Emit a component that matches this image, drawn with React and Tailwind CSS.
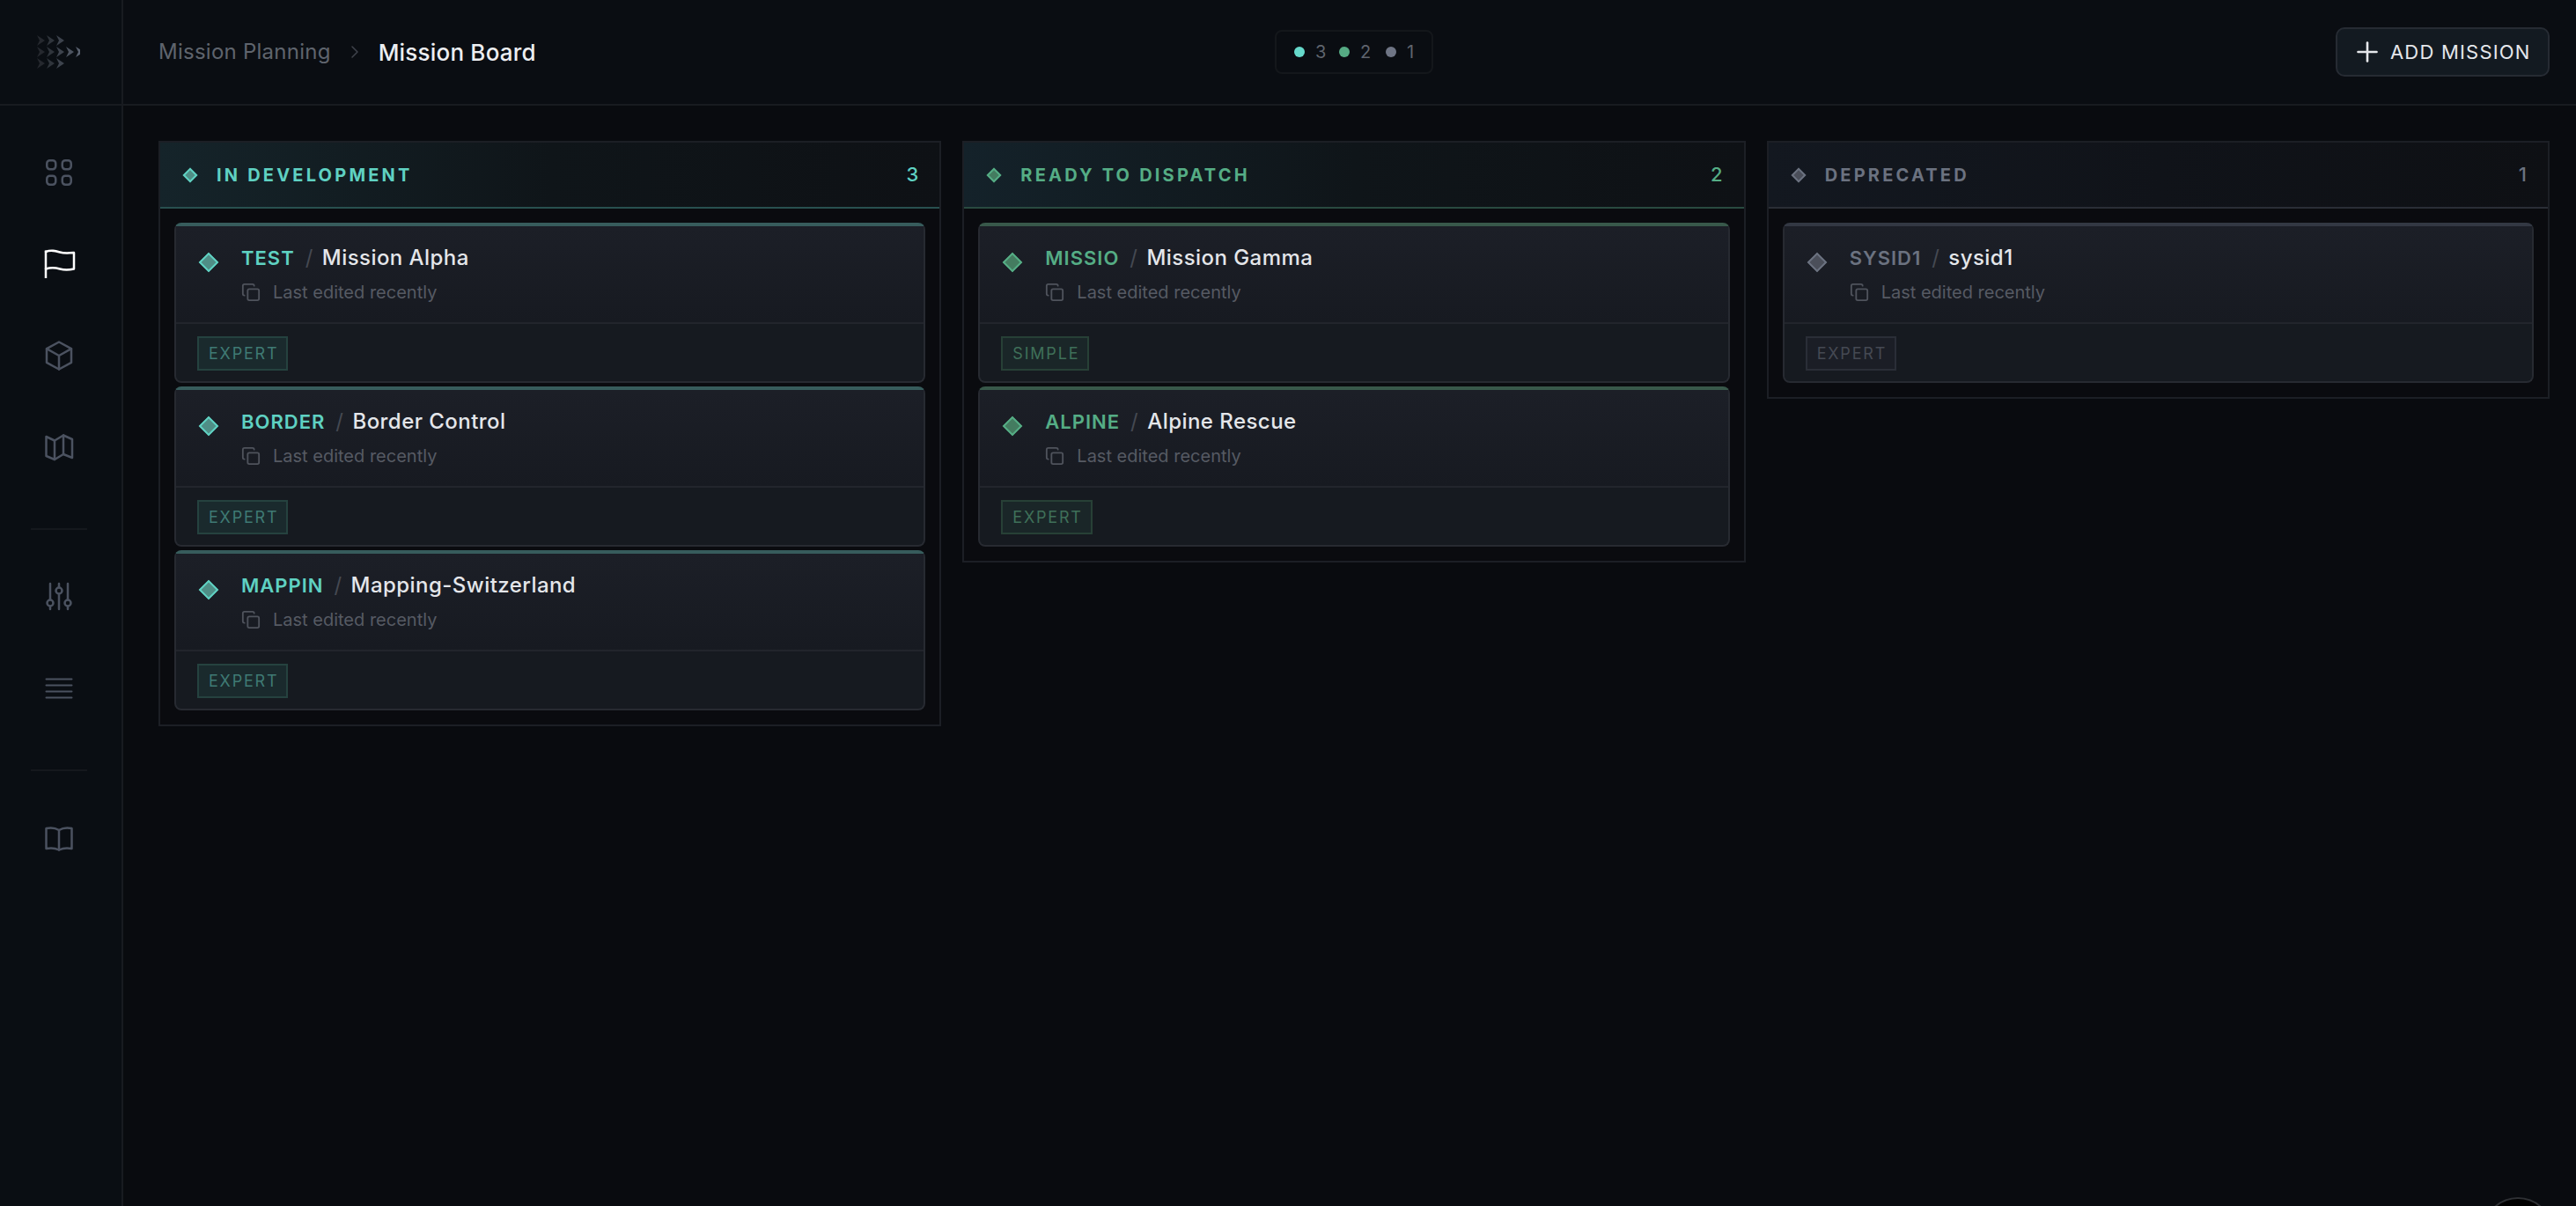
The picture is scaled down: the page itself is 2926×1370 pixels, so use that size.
import { ChevronRight, Copy, Plus } from 'lucide-react'

const themes = {
  teal: {
    text: 'text-[#5fd1c2]',
    diamond: 'border-[#5fd1c2] bg-[#4f8e86]',
    head: 'from-[#15242a] via-[#0f1519] via-50% to-[#0e1115] border-b-[#28504f]',
    cardTop: 'border-t-[#375c5c]',
    badge: 'border-[#25423f] bg-[#1a2a2d] text-[#3f7a74]',
  },
  green: {
    text: 'text-[#55ad85]',
    diamond: 'border-[#55ad85] bg-[#447c60]',
    head: 'from-[#14222a] via-[#0f1519] via-50% to-[#0e1115] border-b-[#294a40]',
    cardTop: 'border-t-[#38584a]',
    badge: 'border-[#274036] bg-[#1a2628] text-[#3f7059]',
  },
  gray: {
    text: 'text-[#6b7280]',
    diamond: 'border-[#6b7280] bg-[#4b4f5a]',
    head: 'from-[#131820] via-[#101319] via-50% to-[#0e1014] border-b-[#2a2e36]',
    cardTop: 'border-t-[#333843]',
    badge: 'border-[#2a2e37] bg-[#1b1e26] text-[#454953]',
  },
}

const columns = [
  {
    title: 'IN DEVELOPMENT',
    theme: 'teal',
    missions: [
      { code: 'TEST', name: 'Mission Alpha', level: 'EXPERT' },
      { code: 'BORDER', name: 'Border Control', level: 'EXPERT' },
      { code: 'MAPPIN', name: 'Mapping-Switzerland', level: 'EXPERT' },
    ],
  },
  {
    title: 'READY TO DISPATCH',
    theme: 'green',
    missions: [
      { code: 'MISSIO', name: 'Mission Gamma', level: 'SIMPLE' },
      { code: 'ALPINE', name: 'Alpine Rescue', level: 'EXPERT' },
    ],
  },
  {
    title: 'DEPRECATED',
    theme: 'gray',
    missions: [{ code: 'SYSID1', name: 'sysid1', level: 'EXPERT' }],
  },
]

function NavIcon({ children, active }) {
  return (
    <div className={`h-20 flex items-center justify-center ${active ? 'text-white' : 'text-[#4b5260]'}`}>
      <svg
        width="40"
        height="40"
        viewBox="0 0 40 40"
        fill="none"
        stroke="currentColor"
        strokeWidth="2.5"
        strokeLinecap="round"
        strokeLinejoin="round"
      >
        {children}
      </svg>
    </div>
  )
}

function Logo() {
  const rows = [
    { y: 17, n: 3 },
    { y: 30, n: 5 },
    { y: 43, n: 3 },
  ]
  const fills = ['#25282e', '#2f343b', '#3d434d', '#4c535f', '#5a6270']
  return (
    <svg width="60" height="60" viewBox="0 0 60 60">
      {rows.map((r) =>
        Array.from({ length: r.n }).map((_, i) => (
          <polygon
            key={`${r.y}-${i}`}
            points={`${11 + i * 11},${r.y - 6} ${20 + i * 11},${r.y} ${11 + i * 11},${r.y + 6} ${14 + i * 11},${r.y}`}
            fill={fills[i]}
          />
        )),
      )}
    </svg>
  )
}

function Sidebar() {
  return (
    <aside className="w-[140px] shrink-0 h-full bg-[#0a0e13] border-r-2 border-[#181b20] flex flex-col">
      <div className="h-[120px] shrink-0 border-b-2 border-[#181b20] flex items-center justify-center pr-4">
        <Logo />
      </div>
      <nav className="pt-9 pr-1 flex flex-col gap-6">
        <NavIcon>
          <rect x="6.25" y="6.25" width="10" height="10" rx="3.4" />
          <rect x="23.75" y="6.25" width="10" height="10" rx="3.4" />
          <rect x="6.25" y="23.75" width="10" height="10" rx="3.4" />
          <rect x="23.75" y="23.75" width="10" height="10" rx="3.4" />
        </NavIcon>
        <NavIcon active>
          <path d="M5 4.5V36" strokeLinecap="butt" />
          <path d="M5 6C11 3.5 16 5 21 6.5C26 8 31 7.5 37 7V25.5C31 27 26 27 21 25.5C16 24 11 23.5 5 25.5" />
        </NavIcon>
        <NavIcon>
          <path d="M20 4.5L34 12.2V27.8L20 35.5L6 27.8V12.2Z" />
          <path d="M6 12.2L20 20L34 12.2M20 20V35.5" />
        </NavIcon>
        <NavIcon>
          <path d="M5.5 8L15 12.5L25 6.5L35 11V32L25 28L15 34L5.5 30Z" />
          <path d="M15 12.5V34M25 6.5V28" />
        </NavIcon>
        <div className="h-0.5 w-16 mx-auto bg-[#15181d] mt-7 mb-3" />
        <NavIcon>
          <path d="M10 5V34M20 5V34M30 5V34" />
          <circle cx="10" cy="27" r="3.5" fill="#0a0e13" />
          <circle cx="20" cy="13" r="3.5" fill="#0a0e13" />
          <circle cx="30" cy="27" r="3.5" fill="#0a0e13" />
        </NavIcon>
        <NavIcon>
          <path d="M5.5 9.5H34.5M5.5 16.5H34.5M5.5 23.5H34.5M5.5 30.5H34.5" strokeWidth="2" />
        </NavIcon>
        <div className="h-0.5 w-16 mx-auto bg-[#15181d] mt-7 mb-3" />
        <NavIcon>
          <path d="M20 11C16 8.5 10 8 5.5 9V32C10 31 16 31.5 20 33.5C24 31.5 30 31 34.5 32V9C30 8 24 8.5 20 11Z" />
          <path d="M20 11V33.5" />
        </NavIcon>
      </nav>
    </aside>
  )
}

function Header() {
  return (
    <header className="h-[120px] shrink-0 border-b-2 border-[#181b20] bg-[#0a0d12] pl-10 pr-[30px] grid grid-cols-3 items-center">
      <div className="flex items-center">
        <span className="text-[24px] tracking-[0.25px] text-[#5f646d]">Mission Planning</span>
        <ChevronRight size={24} strokeWidth={1.5} className="text-[#3f434b] ml-[15px] mr-[15px]" />
        <span className="text-[26px] font-medium tracking-[0.2px] text-[#eceef1]">Mission Board</span>
      </div>
      <div className="justify-self-center flex items-center h-[50px] w-[180px] pl-[20px] border-2 border-[#14171b] rounded-lg text-[20px] text-[#5f646d]">
        <span className="w-3 h-3 rounded-full bg-[#66d9cb]" />
        <span className="ml-[12px] w-[22px]">3</span>
        <span className="ml-[5px] w-3 h-3 rounded-full bg-[#56ab84]" />
        <span className="ml-[12px] w-[22px]">2</span>
        <span className="ml-[7px] w-3 h-3 rounded-full bg-[#6f7585]" />
        <span className="ml-[12px]">1</span>
      </div>
      <div className="justify-self-end">
        <button className="h-[56px] w-[243px] pl-4 flex items-center gap-2 bg-[#131a21] border-2 border-[#262b33] rounded-[10px] text-[22px] tracking-[1.2px] text-[#e5e7eb]">
          <Plus size={36} strokeWidth={1.75} />
          ADD MISSION
        </button>
      </div>
    </header>
  )
}

function MissionCard({ mission, theme }) {
  const t = themes[theme]
  return (
    <div className={`h-[182px] rounded-lg border-2 border-t-4 border-[#272a31] ${t.cardTop} bg-[#161a20] flex flex-col`}>
      <div className="h-[111px] shrink-0 border-b-2 border-[#22252c] bg-gradient-to-b from-[#1c1f27] to-[#171a21] pl-6 pt-5 flex gap-6">
        <div className="w-[26px] h-[26px] mt-2 flex items-center justify-center">
          <div className={`w-4 h-4 rotate-45 border-2 ${t.diamond}`} />
        </div>
        <div>
          <div className="flex items-center h-8 text-[24px] font-medium tracking-[0.45px] text-[#e4e6ea]">
            <span className={`text-[22px] font-semibold tracking-[1px] ${t.text}`}>{mission.code}</span>
            <span className="text-[#454952] ml-3 mr-[10px] font-normal">/</span>
            <span>{mission.name}</span>
          </div>
          <div className="mt-2 h-[30px] flex items-center gap-[14px] text-[20px] text-[#565a63]">
            <Copy size={22} strokeWidth={2} className="text-[#4f535c]" />
            Last edited recently
          </div>
        </div>
      </div>
      <div className="pl-6 pt-[14px]">
        <span className={`inline-flex items-center h-[39px] pl-[11px] pr-[9px] border-2 text-[18px] tracking-[1.8px] ${t.badge}`}>
          {mission.level}
        </span>
      </div>
    </div>
  )
}

function Column({ column }) {
  const t = themes[column.theme]
  return (
    <section className="border-2 border-[#1c1f25] bg-[#0a0b0f]">
      <div className={`h-[75px] border-b-2 bg-gradient-to-r ${t.head} pl-[28px] pr-6 flex items-center`}>
        <div className={`w-3 h-3 rotate-45 border-2 ${t.diamond}`} />
        <h2 className={`ml-6 flex-1 text-[20px] font-bold tracking-[3.2px] ${t.text}`}>{column.title}</h2>
        <span className={`text-[22px] font-medium ${t.text}`}>{column.missions.length}</span>
      </div>
      <div className="p-4 flex flex-col gap-1">
        {column.missions.map((m) => (
          <MissionCard key={m.code} mission={m} theme={column.theme} />
        ))}
      </div>
    </section>
  )
}

export default function App() {
  return (
    <div className="relative h-screen overflow-hidden flex bg-[#090b0f] font-['Inter',sans-serif]">
      <Sidebar />
      <div className="flex-1 min-w-0 flex flex-col">
        <Header />
        <main className="pl-10 pr-[30px] pt-10 grid grid-cols-3 gap-6 items-start">
          {columns.map((c) => (
            <Column key={c.title} column={c} />
          ))}
        </main>
      </div>
      {/* boton flotante casi fuera de la pantalla */}
      <div className="absolute left-[2820px] top-[1360px] w-20 h-20 rounded-full bg-black border-2 border-[#2e3034]" />
    </div>
  )
}
